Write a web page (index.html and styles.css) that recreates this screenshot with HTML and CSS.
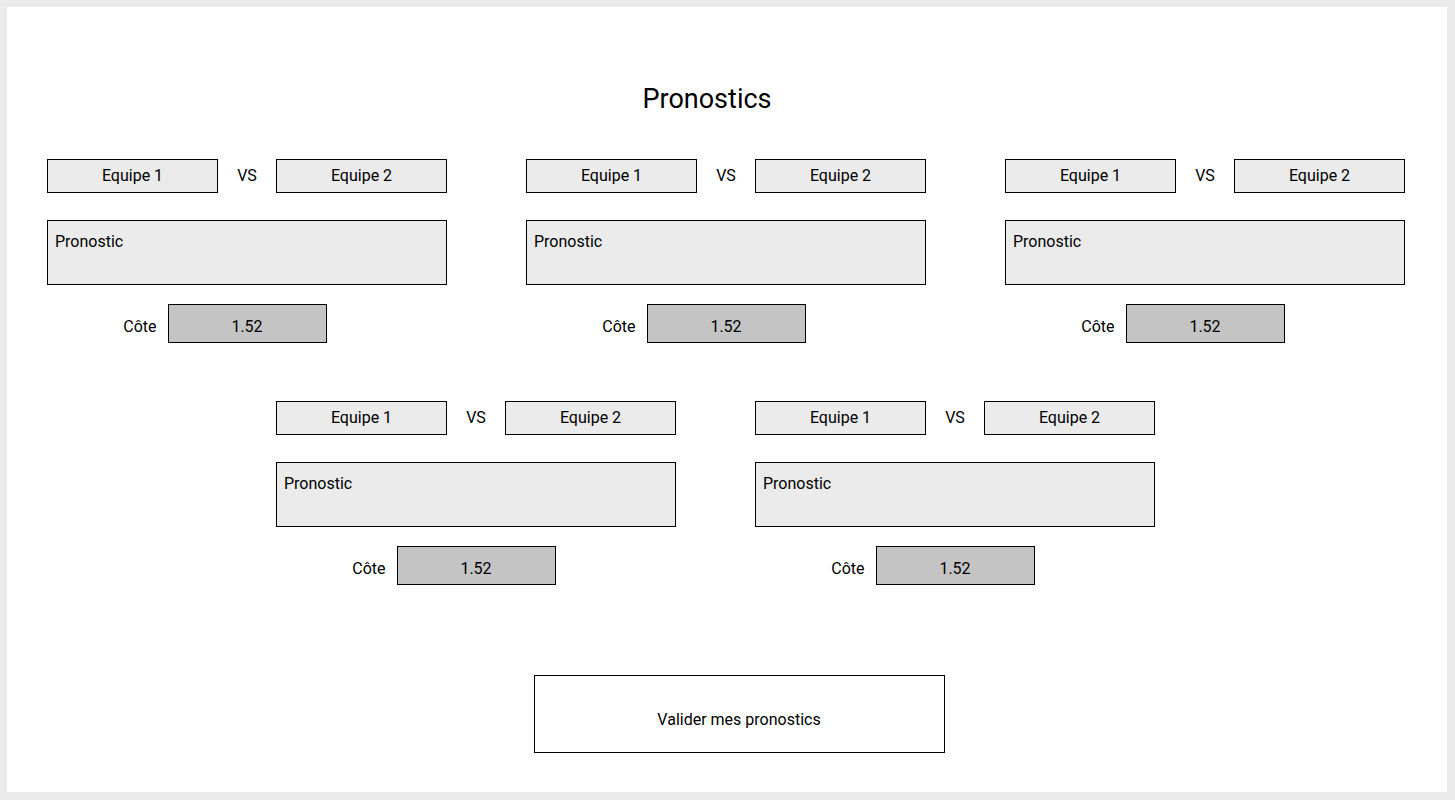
FILE: index.html
```html
<!DOCTYPE html>
<html lang="fr">
<head>
<meta charset="utf-8">
<meta name="viewport" content="width=device-width, initial-scale=1">
<title>Pronostics</title>
<link rel="stylesheet" href="styles.css">
</head>
<body>
<main class="page">
  <h1 class="title">Pronostics</h1>
  <form class="form">
    <div class="row row-three">
      <section class="match">
        <div class="teams"><span class="team">Equipe 1</span><span class="versus">VS</span><span class="team">Equipe 2</span></div>
        <textarea class="forecast" aria-label="Pronostic du match 1">Pronostic</textarea>
        <div class="odds"><label class="odds-label" for="cote1">Côte</label><output class="odds-value" id="cote1">1.52</output></div>
      </section>
      <section class="match">
        <div class="teams"><span class="team">Equipe 1</span><span class="versus">VS</span><span class="team">Equipe 2</span></div>
        <textarea class="forecast" aria-label="Pronostic du match 2">Pronostic</textarea>
        <div class="odds"><label class="odds-label" for="cote2">Côte</label><output class="odds-value" id="cote2">1.52</output></div>
      </section>
      <section class="match">
        <div class="teams"><span class="team">Equipe 1</span><span class="versus">VS</span><span class="team">Equipe 2</span></div>
        <textarea class="forecast" aria-label="Pronostic du match 3">Pronostic</textarea>
        <div class="odds"><label class="odds-label" for="cote3">Côte</label><output class="odds-value" id="cote3">1.52</output></div>
      </section>
    </div>
    <div class="row row-two">
      <section class="match">
        <div class="teams"><span class="team">Equipe 1</span><span class="versus">VS</span><span class="team">Equipe 2</span></div>
        <textarea class="forecast" aria-label="Pronostic du match 4">Pronostic</textarea>
        <div class="odds"><label class="odds-label" for="cote4">Côte</label><output class="odds-value" id="cote4">1.52</output></div>
      </section>
      <section class="match">
        <div class="teams"><span class="team">Equipe 1</span><span class="versus">VS</span><span class="team">Equipe 2</span></div>
        <textarea class="forecast" aria-label="Pronostic du match 5">Pronostic</textarea>
        <div class="odds"><label class="odds-label" for="cote5">Côte</label><output class="odds-value" id="cote5">1.52</output></div>
      </section>
    </div>
    <div class="actions">
      <button class="submit" type="button">Valider mes pronostics</button>
    </div>
  </form>
</main>
</body>
</html>
```

FILE: styles.css
```css
* {
  box-sizing: border-box;
}

body {
  margin: 0;
  min-height: 100vh;
  display: flex;
  padding: 7px 8px 8px 7px;
  background: #ebebeb;
  color: #000;
  font-family: Roboto, "Liberation Sans", sans-serif;
  font-size: 16px;
  line-height: 20px;
}

.page {
  flex: 1;
  min-width: 0;
  padding: 74px 42px 38px 40px;
  background: #fff;
}

.title {
  margin: 0 0 42px;
  padding-right: 38px;
  font-size: 27px;
  font-weight: 400;
  line-height: 36px;
  text-align: center;
}

.form {
  display: grid;
  gap: 58px;
}

.row {
  display: grid;
  gap: 58px 79px;
}

.row-three {
  grid-template-columns: repeat(3, 1fr);
}

.row-two {
  grid-template-columns: repeat(2, 1fr);
  padding: 0 250px 0 229px;
}

.match {
  display: flex;
  flex-direction: column;
}

.teams {
  display: grid;
  grid-template-columns: 1fr 58px 1fr;
  align-items: center;
  text-align: center;
}

.team {
  padding: 6px 4px;
  border: 1px solid #000;
  background: #ebebeb;
}

.forecast {
  display: block;
  width: 100%;
  height: 65px;
  margin: 27px 0 19px;
  padding: 11px 7px;
  border: 1px solid #000;
  border-radius: 0;
  background: #ebebeb;
  color: inherit;
  font: inherit;
  resize: none;
}

.odds {
  display: grid;
  grid-template-columns: 1fr 159px 1fr;
  text-align: center;
}

.odds-label {
  padding: 13px 11px 6px 0;
  text-align: right;
}

.odds-value {
  padding: 12px 4px 5px;
  border: 1px solid #000;
  background: #c4c4c4;
}

.actions {
  display: flex;
  justify-content: center;
  padding: 32px 0 0 26px;
}

.submit {
  width: 411px;
  padding: 34px 16px 22px;
  border: 1px solid #000;
  border-radius: 0;
  background: #fff;
  color: inherit;
  font: inherit;
}

@media (max-width: 1200px) {
  .row-three,
  .row-two {
    grid-template-columns: repeat(auto-fit, minmax(280px, 1fr));
    padding: 0;
  }
}
```
